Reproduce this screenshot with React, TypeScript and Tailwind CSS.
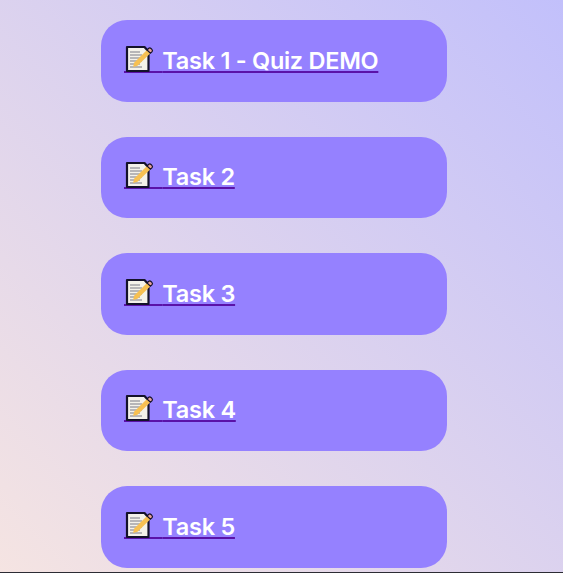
const tasks = ["Task 1 - Quiz DEMO", "Task 2", "Task 3", "Task 4", "Task 5"];

function Memo() {
  return (
    <svg viewBox="0 0 30 28" className="absolute left-0 top-[-4px] w-[30px] h-[28px]" aria-hidden="true">
      <path d="M3 2h17.500l4 4.500v19.500h-21.500z" fill="#f4f2ea" stroke="#14122a" strokeWidth="2.200" strokeLinejoin="round" />
      <path d="M6 7h10M6 10h12M6 13h12M6 16h12M6 19h10M6 22h12" stroke="#a3a3a8" strokeWidth="1.300" />
      <path d="M9 22l1.300-4.500L23 5l3.400 3.200L13.500 20.800z" fill="#f7c052" />
      <path d="M23 5l1.500-1.500a1.800 1.800 0 0 1 2.500 0l.9.900a1.800 1.800 0 0 1 0 2.500L26.400 8.200z" fill="#e9a09a" stroke="#14122a" strokeWidth="1.200" />
    </svg>
  );
}

export default function App() {
  return (
    <div className="h-[573px] overflow-hidden border-b border-[#2c2c34] bg-[linear-gradient(to_top_right,#f5e4e2,#c2c0fb)] font-['Inter','Noto_Sans',sans-serif]">
      <div className="ml-[101px] w-[345.500px] pt-5 flex flex-col gap-[35px]">
        {tasks.map((t) => (
          <div key={t} className="h-[81.600px] rounded-[26px] bg-[#9581ff] pl-[23px] flex items-center">
            <a href="#" className="relative mt-[-1px] text-white font-semibold text-[23.500px] tracking-[-0.28px] leading-none underline decoration-[#5a12a8] decoration-2 underline-offset-[2px] whitespace-pre">
              <Memo />
              {"\u2003\u2002\u2009"}
              {t}
            </a>
          </div>
        ))}
      </div>
    </div>
  );
}
